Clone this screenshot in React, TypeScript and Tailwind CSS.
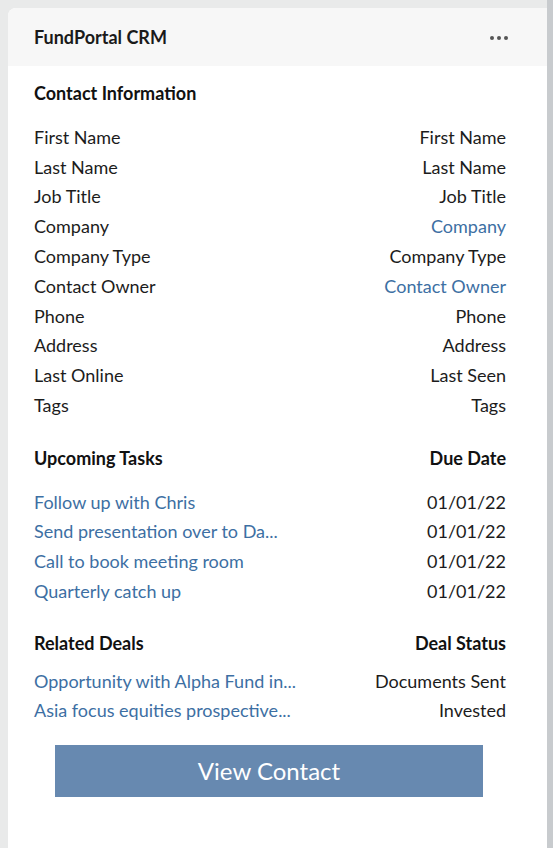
const contactRows: { label: string; value: string; link?: boolean }[] = [
  { label: 'First Name', value: 'First Name' },
  { label: 'Last Name', value: 'Last Name' },
  { label: 'Job Title', value: 'Job Title' },
  { label: 'Company', value: 'Company', link: true },
  { label: 'Company Type', value: 'Company Type' },
  { label: 'Contact Owner', value: 'Contact Owner', link: true },
  { label: 'Phone', value: 'Phone' },
  { label: 'Address', value: 'Address' },
  { label: 'Last Online', value: 'Last Seen' },
  { label: 'Tags', value: 'Tags' },
];

const tasks = [
  'Follow up with Chris',
  'Send presentation over to Da...',
  'Call to book meeting room',
  'Quarterly catch up',
];

const deals = [
  { name: 'Opportunity with Alpha Fund in...', status: 'Documents Sent' },
  { name: 'Asia focus equities prospective...', status: 'Invested' },
];

function Row({ left, right, leftLink, rightLink }: { left: string; right: string; leftLink?: boolean; rightLink?: boolean }) {
  return (
    <div className="flex justify-between leading-[29.8px]">
      <span className={leftLink ? 'text-[#3d6fa3]' : 'text-[#1c1c1c]'}>{left}</span>
      <span className={rightLink ? 'text-[#3d6fa3]' : 'text-[#1c1c1c]'}>{right}</span>
    </div>
  );
}

export default function App() {
  return (
    <div className="flex min-h-screen bg-[#e9eaea]" style={{ fontFamily: 'Lato, "Open Sans", sans-serif' }}>
      <div className="flex-1 pt-2 pl-2">
        <div className="h-[840px] bg-white rounded-tl-lg overflow-hidden">
          <div className="h-[58px] bg-[#f7f7f7] flex items-center justify-between pl-[26px] pr-[39px] pt-[1px]">
            <span className="text-[18px] font-bold text-[#1a1a1a]">FundPortal CRM</span>
            <div className="flex gap-[3px]">
              <span className="w-[4px] h-[4px] rounded-full bg-[#555]" />
              <span className="w-[4px] h-[4px] rounded-full bg-[#555]" />
              <span className="w-[4px] h-[4px] rounded-full bg-[#555]" />
            </div>
          </div>

          <div className="pl-[26px] pr-[41px] pt-[13px] text-[18px]">
            <div className="font-bold text-[#111] leading-[29.8px]">Contact Information</div>
            <div className="mt-[14px]">
              {contactRows.map((r) => (
                <Row key={r.label} left={r.label} right={r.value} rightLink={r.link} />
              ))}
            </div>

            <div className="mt-[23px] flex justify-between font-bold text-[#111] leading-[29.8px]">
              <span>Upcoming Tasks</span>
              <span>Due Date</span>
            </div>
            <div className="mt-[14px]">
              {tasks.map((t) => (
                <Row key={t} left={t} right="01/01/22" leftLink />
              ))}
            </div>

            <div className="mt-[22px] flex justify-between font-bold text-[#111] leading-[29.8px]">
              <span>Related Deals</span>
              <span>Deal Status</span>
            </div>
            <div className="mt-[8px]">
              {deals.map((d) => (
                <Row key={d.name} left={d.name} right={d.status} leftLink />
              ))}
            </div>

            <button className="mt-[19px] ml-[21px] w-[428px] h-[52px] bg-[#6789b0] text-white text-[24px] flex items-center justify-center">
              View Contact
            </button>
          </div>
        </div>
      </div>
      <div className="w-[6px] bg-[#c8cbce]" />
    </div>
  );
}
